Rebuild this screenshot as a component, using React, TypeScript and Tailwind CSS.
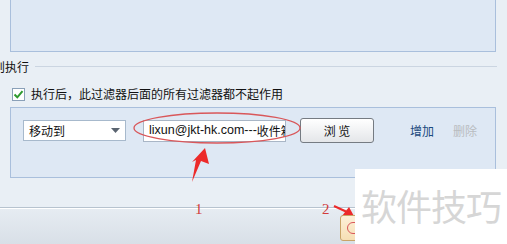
import React from "react";

const cjk = { fontFamily: '"Noto Sans CJK SC", "Liberation Sans", sans-serif' };

export default function App() {
  return (
    <div
      className="relative w-[507px] h-[244px] overflow-hidden bg-[#e9eff5] text-[12px] text-[#111]"
      style={cjk}
    >
      {/* top panel */}
      <div className="ml-[10px] w-[486px] h-[52px] bg-[#dee8f4] border border-t-0 border-[#a9bfdc]" />

      {/* section header */}
      <div className="flex items-center h-[29px]">
        <span className="ml-[-7px] leading-none text-[12px]">则执行</span>
        <div className="ml-[6px] w-[462px] h-px bg-[#cbd5e1]" />
      </div>

      {/* checkbox row */}
      <div className="flex items-center h-[26px] pl-[12px]">
        <div className="w-[13px] h-[13px] bg-white border border-[#8aa0b8] flex items-center justify-center">
          <svg width="11" height="11" viewBox="0 0 11 11">
            <path d="M1.5 5.5 L4.3 8.3 L9.5 2.2" fill="none" stroke="#2f9a2f" strokeWidth="2" />
          </svg>
        </div>
        <span className="ml-[6px] text-[12px] leading-none">执行后，此过滤器后面的所有过滤器都不起作用</span>
      </div>

      {/* second panel */}
      <div className="ml-[10px] w-[486px] h-[71px] bg-[#dee8f4] border border-[#a9bfdc] pt-[10px] pl-[12px]">
        <div className="flex items-center">
          <div className="w-[103px] h-[21px] bg-white border border-[#a7b9cc] flex items-center justify-between pl-[5px] pr-[5px]">
            <span className="text-[12px] leading-none">移动到</span>
            <svg width="9" height="5" viewBox="0 0 9 5">
              <path d="M0 0 H9 L4.5 5 Z" fill="#5a6470" />
            </svg>
          </div>
          <div
            className="ml-[17px] w-[143px] h-[22px] bg-white border border-[#a9b6c6] flex items-center pl-[5px] overflow-hidden whitespace-nowrap text-[12.5px]"
            style={{ fontFamily: '"Liberation Sans", "Noto Sans CJK SC", sans-serif' }}
          >
            lixun@jkt-hk.com---<span className="text-[12px]" style={cjk}>收件箱</span>
          </div>
          <div className="ml-[14px] w-[74px] h-[25px] rounded-[3px] border border-[#757b82] bg-gradient-to-b from-white to-[#e4e6e9] flex items-center justify-center text-[12px] leading-none">
            浏 览
          </div>
          <span className="ml-[36px] text-[12px] text-[#1b4a7e] leading-none">增加</span>
          <span className="ml-[19px] text-[12px] text-[#b9bcc0] leading-none">删除</span>
        </div>
      </div>

      {/* gap */}
      <div className="h-[29px]" />
      {/* bottom separator and bar */}
      <div className="h-px bg-[#b7c3cf]" />
      <div className="h-px bg-white" />
      <div className="h-[36px] bg-gradient-to-b from-[#e6ecf2] to-[#d8dfe7]" />

      {/* annotations */}
      <svg className="absolute left-0 top-0" width="507" height="244" viewBox="0 0 507 244">
        <ellipse cx="217" cy="128" rx="83" ry="15" fill="none" stroke="#d9575a" strokeWidth="1.3" />
        <polygon points="205,148 209,164 201,161 192,182 196,160 192,162" fill="#ec2a2a" />
        <text x="195" y="214" fill="#d23b3b" fontSize="15" fontFamily="Liberation Serif, serif">1</text>
        <text x="322" y="214" fill="#d23b3b" fontSize="15" fontFamily="Liberation Serif, serif">2</text>
        <path d="M334 206 L347 212" stroke="#ec2a2a" strokeWidth="2" />
        <polygon points="355,218 342,216 349,207" fill="#ec2a2a" />
      </svg>

      {/* yellow button peeking */}
      <div className="absolute left-[340px] top-[215px] w-[30px] h-[26px] rounded-[3px] border border-[#c9a467] bg-gradient-to-b from-[#fdf0d8] to-[#f6dfb4]">
        <div className="absolute left-[6px] top-[6px] w-[16px] h-[12px] rounded-full border border-[#d9575a]" />
      </div>

      {/* watermark overlay */}
      <div className="absolute left-[355px] top-[169px] w-[152px] h-[75px] bg-white pl-[6px] pt-[18px]">
        <div className="text-[36px] leading-[36px] text-[#d6d6d6] whitespace-nowrap tracking-[-1px]" style={cjk}>
          软件技巧
        </div>
      </div>
    </div>
  );
}
